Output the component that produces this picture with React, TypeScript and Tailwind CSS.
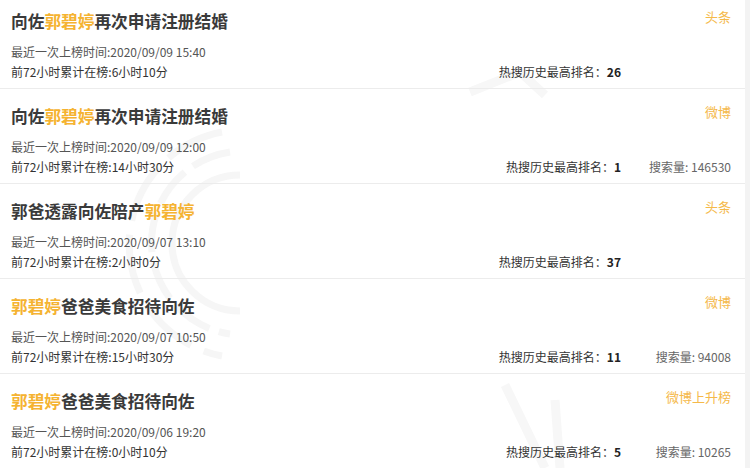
import React from "react";

type Item = {
  pre: string;
  hl: string;
  post: string;
  tag: string;
  time: string;
  dur: string;
  rank: number;
  search?: number;
};

const items: Item[] = [
  { pre: "向佐", hl: "郭碧婷", post: "再次申请注册结婚", tag: "头条", time: "2020/09/09 15:40", dur: "6小时10分", rank: 26 },
  { pre: "向佐", hl: "郭碧婷", post: "再次申请注册结婚", tag: "微博", time: "2020/09/09 12:00", dur: "14小时30分", rank: 1, search: 146530 },
  { pre: "郭爸透露向佐陪产", hl: "郭碧婷", post: "", tag: "头条", time: "2020/09/07 13:10", dur: "2小时0分", rank: 37 },
  { pre: "", hl: "郭碧婷", post: "爸爸美食招待向佐", tag: "微博", time: "2020/09/07 10:50", dur: "15小时30分", rank: 11, search: 94008 },
  { pre: "", hl: "郭碧婷", post: "爸爸美食招待向佐", tag: "微博上升榜", time: "2020/09/06 19:20", dur: "0小时10分", rank: 5, search: 10265 },
];

function Watermark() {
  return (
    <svg className="pointer-events-none absolute inset-0" width="745" height="468" viewBox="0 0 745 468">
      <g fill="none" stroke="#f6f6f6" strokeWidth="7">
        <path d="M240 175 A68 68 0 0 0 240 311" />
        <path d="M230 152 A92 92 0 0 0 230 334" strokeDasharray="40 10" />
        <path d="M222 132 A114 114 0 0 0 222 356" strokeDasharray="60 14" />
      </g>
      <g fill="none" stroke="#f7f7f7" strokeWidth="9">
        <path d="M470 92 L520 72 L545 95" />
        <path d="M505 385 L545 468" />
        <path d="M555 400 L560 468" />
      </g>
    </svg>
  );
}

export default function App() {
  return (
    <div
      className="flex w-[750px] h-[468px] overflow-hidden bg-white"
      style={{ fontFamily: '"Noto Sans CJK SC", "Noto Sans", sans-serif' }}
    >
      <div className="relative flex-1">
        <Watermark />
        <div className="relative -mt-[6px]">
          {items.map((it, i) => (
            <div key={i} className="h-[95px] border-b border-[#ececec] pl-[11px] pr-[14px] pt-[14px]">
              <div className="flex items-start justify-between">
                <div className="text-[16.7px] font-bold leading-[27px] text-[#3a3a3a]">
                  {it.pre}
                  <span className="text-[#f5b331]">{it.hl}</span>
                  {it.post}
                </div>
                <div className="text-[13px] leading-[18px] text-[#f5b94a]">{it.tag}</div>
              </div>
              <div className="mt-[7px] text-[12px] leading-[20px] text-[#555]">最近一次上榜时间:{it.time}</div>
              <div className="flex items-center justify-between text-[12px] leading-[20px]">
                <div className="text-[#333]">前72小时累计在榜:{it.dur}</div>
                <div className="flex items-center">
                  <div className="text-[#333]">
                    热搜历史最高排名：<span className="font-bold text-[#222]">{it.rank}</span>
                  </div>
                  <div className="w-[110px] text-right text-[#666]">
                    {it.search !== undefined ? `搜索量: ${it.search}` : ""}
                  </div>
                </div>
              </div>
            </div>
          ))}
        </div>
      </div>
      <div className="w-[5px] bg-[#f3f3f3]" />
    </div>
  );
}
